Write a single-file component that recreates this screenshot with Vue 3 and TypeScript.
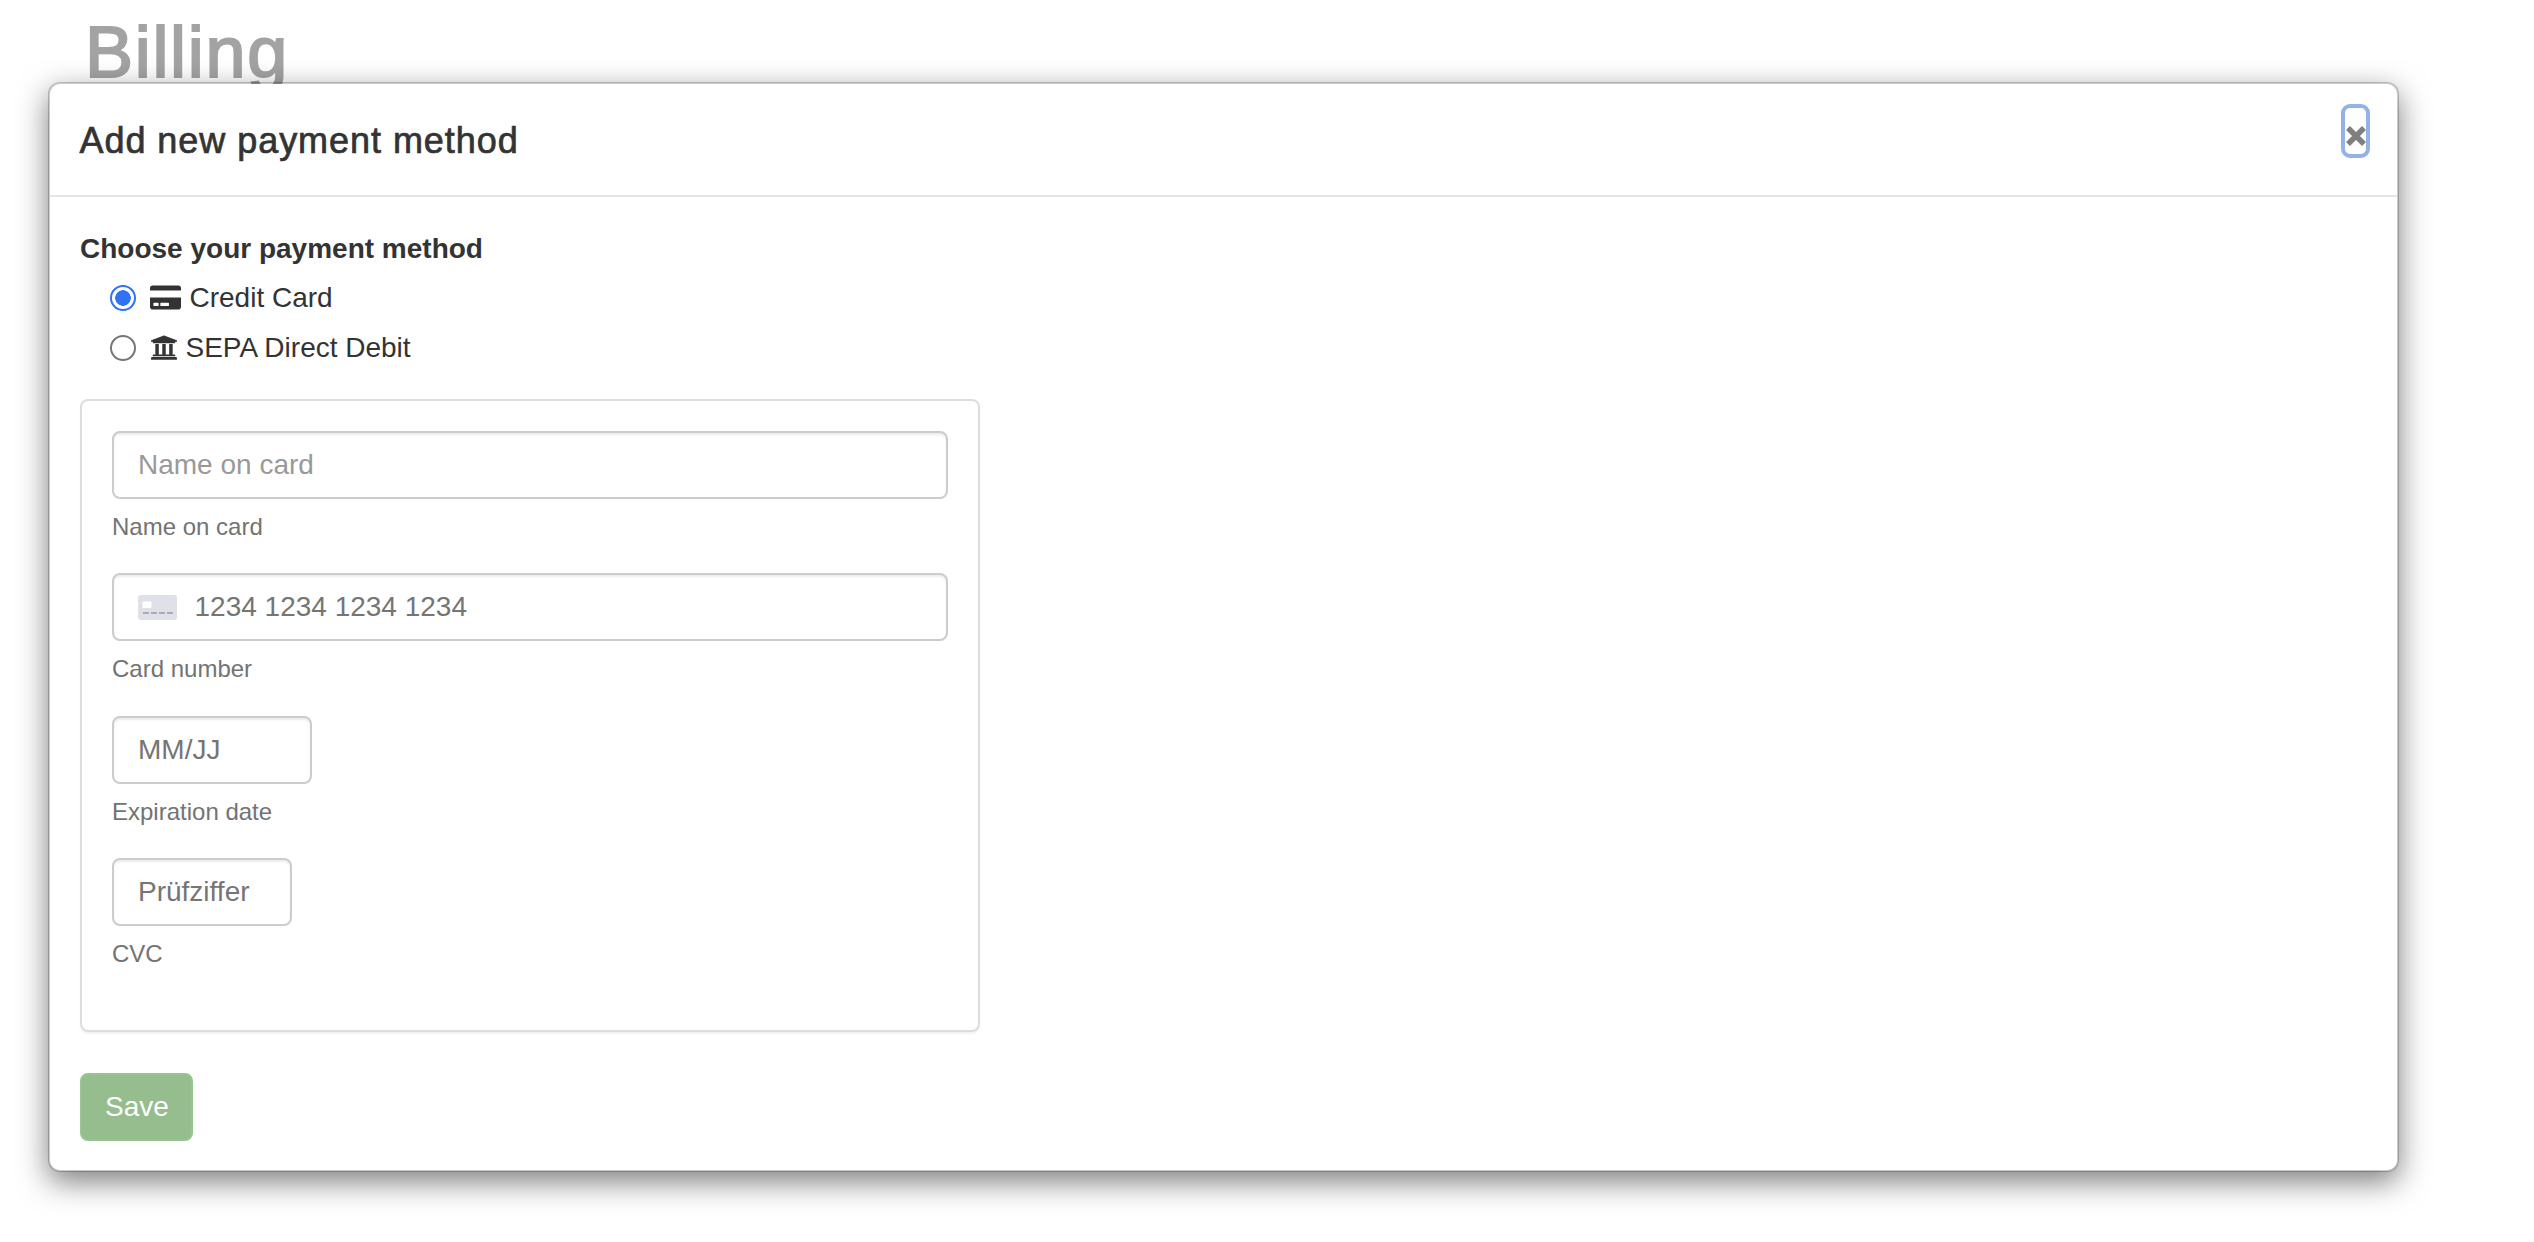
<script setup lang="ts">
import { ref } from 'vue'

const method = ref<'card' | 'sepa'>('card')
</script>

<template>
  <div class="page">
    <h1 class="page-title">Billing</h1>

    <section class="modal" role="dialog" aria-labelledby="modal-title">
      <header class="modal-header">
        <h2 id="modal-title" class="modal-title">Add new payment method</h2>
        <button class="close" type="button" aria-label="Close">
          <svg width="20" height="20" viewBox="0 0 20 20" aria-hidden="true">
            <path d="M2 2l16 16M18 2L2 18" />
          </svg>
        </button>
      </header>

      <div class="modal-body">
        <p class="group-label">Choose your payment method</p>

        <label class="radio-row">
          <input v-model="method" type="radio" name="method" value="card" />
          <svg class="icon-card" width="31" height="25" viewBox="0 32 576 448" aria-hidden="true">
            <path d="M0 432c0 26.500 21.500 48 48 48h480c26.500 0 48-21.500 48-48V256H0v176zm192-68c0-6.600 5.400-12 12-12h136c6.600 0 12 5.400 12 12v40c0 6.600-5.400 12-12 12H204c-6.600 0-12-5.400-12-12v-40zm-128 0c0-6.600 5.400-12 12-12h72c6.600 0 12 5.400 12 12v40c0 6.600-5.400 12-12 12H76c-6.600 0-12-5.400-12-12v-40zM576 80v48H0V80c0-26.500 21.500-48 48-48h480c26.500 0 48 21.500 48 48z" />
          </svg>
          <span>Credit Card</span>
        </label>

        <label class="radio-row">
          <input v-model="method" type="radio" name="method" value="sepa" />
          <svg class="icon-bank" width="26" height="25" viewBox="16 32 480 448" aria-hidden="true">
            <path d="M496 128v16a8 8 0 0 1-8 8h-24v12c0 6.627-5.373 12-12 12H60c-6.627 0-12-5.373-12-12v-12H24a8 8 0 0 1-8-8v-16a8 8 0 0 1 4.941-7.392l232-88a7.996 7.996 0 0 1 6.118 0l232 88A8 8 0 0 1 496 128zm-24 304H40c-13.255 0-24 10.745-24 24v16a8 8 0 0 0 8 8h464a8 8 0 0 0 8-8v-16c0-13.255-10.745-24-24-24zM96 192v192H60c-6.627 0-12 5.373-12 12v20h416v-20c0-6.627-5.373-12-12-12h-36V192h-64v192h-64V192h-64v192h-64V192H96z" />
          </svg>
          <span>SEPA Direct Debit</span>
        </label>

        <div class="card-panel">
          <div class="field">
            <div class="control">
              <input class="light" type="text" placeholder="Name on card" />
            </div>
            <small>Name on card</small>
          </div>

          <div class="field">
            <div class="control with-icon">
              <svg width="39" height="25" viewBox="0 0 39 25" aria-hidden="true">
                <rect width="39" height="25" rx="3" fill="#dfe0e8" />
                <rect x="4.500" y="6.500" width="9" height="6.500" rx="1" fill="#fff" />
                <path d="M5 18h6M13 18h6M21 18h6M29 18h6" stroke="#a9abbd" stroke-width="2" />
              </svg>
              <input type="text" placeholder="1234 1234 1234 1234" />
            </div>
            <small>Card number</small>
          </div>

          <div class="field">
            <div class="control expiry">
              <input type="text" placeholder="MM/JJ" />
            </div>
            <small>Expiration date</small>
          </div>

          <div class="field">
            <div class="control cvc">
              <input type="text" placeholder="Prüfziffer" />
            </div>
            <small>CVC</small>
          </div>
        </div>

        <button class="save" type="button">Save</button>
      </div>
    </section>
  </div>
</template>

<style>
html,
body {
  margin: 0;
  background: #fff;
}
</style>

<style scoped>
.page {
  position: relative;
  height: 1242px;
  overflow: hidden;
  font-family: "Liberation Sans", Arial, sans-serif;
  color: #333;
}

.page-title {
  margin: 0;
  padding: 12px 0 0 85px;
  font-size: 72px;
  line-height: 80px;
  font-weight: 400;
  letter-spacing: 1.700px;
  color: #a3a3a3;
  -webkit-text-stroke: 2px #a3a3a3;
}

.modal {
  position: absolute;
  left: 48px;
  top: 82px;
  width: 2351px;
  box-sizing: border-box;
  border: 2px solid rgba(0, 0, 0, 0.2);
  border-radius: 12px;
  background: #fff;
  background-clip: padding-box;
  box-shadow: 0 10px 30px rgba(0, 0, 0, 0.5);
}

.modal-header {
  display: flex;
  justify-content: space-between;
  align-items: flex-start;
  padding: 20px 27px 34px 29.500px;
  border-bottom: 2px solid #e5e5e5;
}

.modal-title {
  margin: 17px 0 0;
  font-size: 36px;
  line-height: 40px;
  font-weight: 400;
  letter-spacing: 0.95px;
  -webkit-text-stroke: 0.7px #333;
}

.close {
  display: flex;
  justify-content: center;
  align-items: flex-start;
  box-sizing: border-box;
  width: 29px;
  height: 54px;
  padding: 18px 0 0;
  border: 4px solid #92b2e8;
  border-radius: 9px;
  background: transparent;
}

.close svg {
  flex: none;
}

.close path {
  fill: none;
  stroke: #7f7f7f;
  stroke-width: 5.500;
}

.modal-body {
  padding: 31.500px 30px 29px;
}

.group-label {
  margin: 0 0 4px;
  font-size: 28px;
  line-height: 40px;
  font-weight: 700;
}

.radio-row {
  display: flex;
  align-items: center;
  height: 50px;
  padding-left: 30px;
  font-size: 28px;
  color: #333;
}

.radio-row input {
  flex: none;
  box-sizing: border-box;
  width: 26px;
  height: 26px;
  margin: 0 14px 0 0;
  appearance: none;
  border: 2px solid #767676;
  border-radius: 50%;
  background: #fff;
}

.radio-row input:checked {
  border: 2.500px solid #2f72f6;
  background: radial-gradient(circle, #2f72f6 0 7.500px, #fff 8px);
}

.radio-row svg {
  flex: none;
  fill: #333;
}

.icon-card {
  margin-right: 8.500px;
}

.icon-bank {
  margin-left: 1px;
  margin-right: 8.500px;
}

.card-panel {
  box-sizing: border-box;
  width: 900px;
  margin-top: 26px;
  padding: 30px 30px 29px;
  border: 2px solid #ddd;
  border-radius: 8px;
  box-shadow: 0 2px 2px rgba(0, 0, 0, 0.05);
}

.field small {
  display: block;
  margin: 11px 0 29.500px;
  font-size: 24px;
  line-height: 34px;
  color: #737373;
}

.control {
  display: flex;
  align-items: center;
  box-sizing: border-box;
  height: 68px;
  padding: 0 24px;
  border: 2px solid #ccc;
  border-radius: 8px;
  background: #fff;
  box-shadow: inset 0 2px 2px rgba(0, 0, 0, 0.075);
}

.control input {
  flex: 1;
  min-width: 0;
  padding: 0;
  border: 0;
  outline: 0;
  background: transparent;
  font: 28px "Liberation Sans", Arial, sans-serif;
  color: #333;
}

.control input::placeholder {
  color: #757575;
  opacity: 1;
}

.control input.light::placeholder {
  color: #999;
}

.with-icon svg {
  flex: none;
  margin-right: 17.500px;
}

.expiry {
  width: 200px;
}

.cvc {
  width: 180px;
}

.save {
  display: block;
  box-sizing: border-box;
  width: 113px;
  height: 68px;
  margin-top: 41px;
  padding: 0 0 0 1px;
  border: 2px solid #98c48f;
  border-radius: 8px;
  background: #95bd8d;
  font: 28px "Liberation Sans", Arial, sans-serif;
  color: #fff;
}
</style>
